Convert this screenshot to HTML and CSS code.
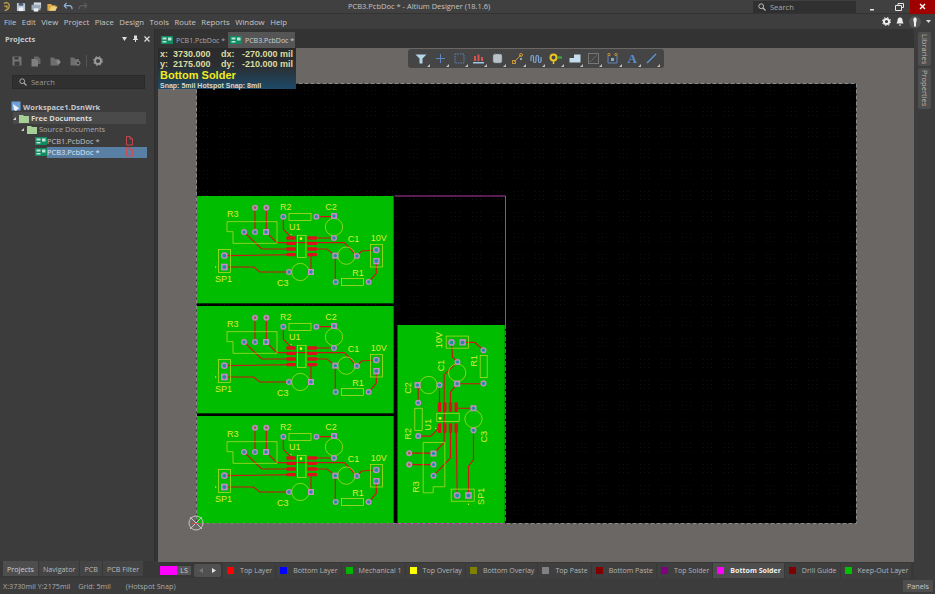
FILE: index.html
```html
<!DOCTYPE html>
<html lang="en">
<head>
    <meta charset="UTF-8">
    <title>PCB3.PcbDoc * - Altium Designer (18.1.6)</title>
    <link rel="stylesheet" href="styles.css">
</head>
<body>
    <svg class="defs" width="0" height="0">
        <defs>
            <g id="doc-icon">
                <rect x="0" y="0" width="12" height="8" fill="#0f8a63"/>
                <rect x="1.500" y="1.500" width="4" height="2" fill="#bfe6d4"/>
                <rect x="7" y="1.500" width="3.500" height="3" fill="#bfe6d4"/>
                <rect x="1.500" y="5" width="4" height="1.500" fill="#bfe6d4"/>
            </g>
            <g id="red-doc">
                <path d="M0.500 0.500h3.500l2.500 2.500v6h-6z M4 0.500v2.500h2.500" fill="none" stroke="#d2484e" stroke-width="0.900"/>
            </g>
            <g id="board">
                <rect x="20" y="18" width="590" height="322" fill="#00bd00"/>
                <g class="track">
                    <path d="M194 53V126M228 53V126M279 80V118L305 144M378 80H431M431 144H366"/>
                    <path d="M161 126L214 177H302M227 126L260 158H462L500 198"/>
                    <path d="M102 197L316 194M102 231H190L208 246H296M362 246V194"/>
                    <path d="M366 177H410L435 197V276M500 198L514 183L558 180M558 213V250L535 276"/>
                </g>
                <g class="overlay">
                    <path d="M110 95H260V160H128V125H110Z"/>
                    <rect x="296" y="70" width="66" height="22"/>
                    <rect x="453" y="266" width="66" height="21"/>
                    <rect x="541" y="164" width="36" height="67"/>
                    <rect x="85" y="179" width="36" height="69"/>
                    <rect x="322" y="136" width="25" height="67"/>
                    <circle cx="431" cy="111" r="26"/>
                    <circle cx="468" cy="197" r="26"/>
                    <circle cx="330" cy="246" r="26"/>
                </g>
                <g class="smd">
                    <rect x="288" y="139" width="29" height="10" rx="3"/>
                    <rect x="288" y="155" width="29" height="10" rx="3"/>
                    <rect x="288" y="172" width="29" height="10" rx="3"/>
                    <rect x="288" y="189" width="29" height="10" rx="3"/>
                    <rect x="351" y="139" width="29" height="10" rx="3"/>
                    <rect x="351" y="155" width="29" height="10" rx="3"/>
                    <rect x="351" y="172" width="29" height="10" rx="3"/>
                    <rect x="351" y="189" width="29" height="10" rx="3"/>
                </g>
                <circle cx="332" cy="146" r="4" fill="#f2f21e"/>
                <circle cx="302" cy="133" r="2" fill="#f2f21e"/>
                <circle cx="76" cy="231" r="2" fill="#f2f21e"/>
                <g class="pad">
                    <circle cx="279" cy="80" r="9"/>
                    <circle cx="378" cy="80" r="9"/>
                    <circle cx="431" cy="144" r="9"/>
                    <circle cx="161" cy="126" r="9"/>
                    <circle cx="194" cy="126" r="9"/>
                    <circle cx="500" cy="198" r="9"/>
                    <circle cx="558" cy="180" r="10"/>
                    <circle cx="436" cy="276" r="9"/>
                    <circle cx="535" cy="276" r="9"/>
                    <circle cx="296" cy="246" r="9"/>
                    <circle cx="102" cy="197" r="10"/>
                    <circle cx="194" cy="53" r="9"/>
                    <circle cx="228" cy="53" r="9"/>
                    <rect x="422" y="69" width="18" height="18"/>
                    <rect x="218" y="117" width="18" height="18"/>
                    <rect x="426" y="188" width="18" height="18"/>
                    <rect x="353" y="237" width="18" height="18"/>
                    <rect x="549" y="204" width="19" height="19"/>
                    <rect x="92" y="221" width="20" height="20"/>
                </g>
                <g class="hole">
                    <circle cx="279" cy="80" r="5"/>
                    <circle cx="378" cy="80" r="5"/>
                    <circle cx="431" cy="144" r="5"/>
                    <circle cx="161" cy="126" r="5"/>
                    <circle cx="194" cy="126" r="5"/>
                    <circle cx="500" cy="198" r="5"/>
                    <circle cx="558" cy="180" r="6"/>
                    <circle cx="436" cy="276" r="5"/>
                    <circle cx="535" cy="276" r="5"/>
                    <circle cx="296" cy="246" r="5"/>
                    <circle cx="102" cy="197" r="6"/>
                    <circle cx="431" cy="78" r="5"/>
                    <circle cx="227" cy="126" r="5"/>
                    <circle cx="435" cy="197" r="5"/>
                    <circle cx="362" cy="246" r="5"/>
                    <circle cx="558" cy="213" r="6"/>
                    <circle cx="102" cy="231" r="6"/>
                </g>
                <circle cx="194" cy="53" r="4" fill="#8a6a3a"/>
                <circle cx="228" cy="53" r="4" fill="#8a6a3a"/>
                <g class="silk">
                    <text x="110" y="82">R3</text>
                    <text x="269" y="60">R2</text>
                    <text x="296" y="120">U1</text>
                    <text x="405" y="60">C2</text>
                    <text x="472" y="157">C1</text>
                    <text x="541" y="153">10V</text>
                    <text x="486" y="257">R1</text>
                    <text x="74" y="277">SP1</text>
                    <text x="260" y="288">C3</text>
                </g>
            </g>
            <pattern id="grid-dots" x="197" y="84" width="21" height="21" patternUnits="userSpaceOnUse">
                <g fill="#121212">
                    <rect x="2" y="2" width="1" height="1"/>
                    <rect x="6" y="2" width="1" height="1"/>
                    <rect x="10" y="2" width="1" height="1"/>
                    <rect x="2" y="6" width="1" height="1"/>
                    <rect x="6" y="6" width="1" height="1"/>
                    <rect x="10" y="6" width="1" height="1"/>
                    <rect x="2" y="10" width="1" height="1"/>
                    <rect x="6" y="10" width="1" height="1"/>
                    <rect x="10" y="10" width="1" height="1"/>
                </g>
            </pattern>
        </defs>
    </svg>

    <header class="titlebar">
        <div class="quick-icons">
            <svg width="9" height="11" viewBox="0 0 10 12"><path d="M2 2.500C6 1 8 2 8 5C8 8 6 10 3 10.500M2.500 5.500H5.500V8" fill="none" stroke="#c8a24a" stroke-width="1.400"/></svg>
            <svg width="10" height="10" viewBox="0 0 11 11"><path d="M1 1H9L10 2V10H1Z" fill="#b9c6d6"/><rect x="3" y="1" width="5" height="3" fill="#4c5a6c"/><rect x="3" y="6" width="5" height="4" fill="#eef2f6"/></svg>
            <svg width="11" height="10" viewBox="0 0 12 11"><rect x="3" y="0.500" width="8" height="6" fill="#d4dbe3"/><rect x="0.500" y="3" width="10" height="6" fill="#9aa8b8"/><rect x="3" y="7" width="5" height="3.500" fill="#eef2f6"/></svg>
            <svg width="11" height="10" viewBox="0 0 13 11"><path d="M0.500 2H5L6 3.500H10V10H0.500Z" fill="#d7a94a"/><path d="M2.500 10L5 5H12.500L10 10Z" fill="#f0cf7a"/></svg>
            <svg width="10" height="9" viewBox="0 0 11 10"><path d="M1 4H7C9 4 10 5.500 10 8M1 4L4 1M1 4L4 7" fill="none" stroke="#8fb4d8" stroke-width="1.300"/></svg>
            <svg width="10" height="9" viewBox="0 0 11 10"><path d="M10 4H4C2 4 1 5.500 1 8M10 4L7 1M10 4L7 7" fill="none" stroke="#5e5e5e" stroke-width="1.300"/></svg>
        </div>
        <div class="app-title">PCB3.PcbDoc * - Altium Designer (18.1.6)</div>
        <div class="title-search">
            <svg width="8" height="8" viewBox="0 0 8 8"><circle cx="3.200" cy="3.200" r="2.400" fill="none" stroke="#bbb" stroke-width="1"/><path d="M5 5L7.500 7.500" stroke="#bbb" stroke-width="1.200"/></svg>
            <span>Search</span>
        </div>
        <div class="window-btns">
            <div class="win-btn"><svg width="8" height="8" viewBox="0 0 8 8"><rect x="2" y="6" width="4" height="1.500" fill="#e6e6e6"/></svg></div>
            <div class="win-btn"><svg width="9" height="8" viewBox="0 0 9 8"><path d="M3 2V0.500H8.500V4.500H6.500M0.500 2.500H6.500V7.500H0.500Z" fill="none" stroke="#e6e6e6"/></svg></div>
            <div class="win-btn close-btn"><svg width="7" height="7" viewBox="0 0 7 7"><path d="M1 1L6 6M6 1L1 6" stroke="#fff" stroke-width="1.400"/></svg></div>
        </div>
    </header>

    <nav class="menubar">
        <span>File</span><span>Edit</span><span>View</span><span>Project</span><span>Place</span><span>Design</span><span>Tools</span><span>Route</span><span>Reports</span><span>Window</span><span>Help</span>
        <div class="menu-right">
            <svg width="9" height="9" viewBox="0 0 9 9"><circle cx="4.500" cy="4.500" r="2.600" fill="none" stroke="#eee" stroke-width="2"/><circle cx="4.500" cy="4.500" r="4.200" fill="none" stroke="#eee" stroke-width="1" stroke-dasharray="1.500 1.800"/></svg>
            <svg width="8" height="9" viewBox="0 0 8 9"><path d="M4 0.500C6 0.500 6.500 2 6.500 4L7.500 6.500H0.500L1.500 4C1.500 2 2 0.500 4 0.500ZM3 7.500H5V8.500H3Z" fill="#eee"/></svg>
            <svg width="12" height="12" viewBox="0 0 12 12"><circle cx="6" cy="6" r="6" fill="#555"/><path d="M6 1.500C7.500 1.500 8 3 7.500 5L7 7V10.500H5V7L4.500 5C4 3 4.500 1.500 6 1.500Z" fill="#f2f2f2"/></svg>
            <svg width="5" height="3" viewBox="0 0 5 3"><path d="M0 0H5L2.500 3Z" fill="#ddd"/></svg>
        </div>
    </nav>

    <div class="main">
        <aside class="left-col">
            <section class="panel">
                <div class="panel-head">
                    <span class="panel-title">Projects</span>
                    <div class="panel-ctrls">
                        <svg width="5" height="4" viewBox="0 0 5 4"><path d="M0 0H5L2.500 4Z" fill="#ddd"/></svg>
                        <svg width="5" height="7" viewBox="0 0 5 7"><path d="M1 0.500H4V4H5V5H3V7H2V5H0V4H1Z" fill="#ddd"/></svg>
                        <svg width="6" height="6" viewBox="0 0 6 6"><path d="M0.500 0.500L5.500 5.500M5.500 0.500L0.500 5.500" stroke="#ddd" stroke-width="1.200"/></svg>
                    </div>
                </div>
                <div class="panel-tools">
                    <svg width="10" height="10" viewBox="0 0 10 10"><path d="M0.500 0.500H8.500L9.500 1.500V9.500H0.500Z" fill="#757575"/><rect x="2.500" y="5.500" width="5" height="4" fill="#3c3c3c"/><rect x="2.500" y="1" width="4" height="2.500" fill="#3c3c3c"/></svg>
                    <svg width="10" height="11" viewBox="0 0 10 11"><path d="M3 0.500H7L9.500 3V8H3Z" fill="#666"/><path d="M0.500 3H5L7 5V10.500H0.500Z" fill="#808080"/></svg>
                    <svg width="11" height="9" viewBox="0 0 11 9"><path d="M0.500 0.500H4L5 2H9V8.500H0.500Z" fill="#6e6e6e"/><circle cx="8.500" cy="5" r="2" fill="#8a8a8a"/></svg>
                    <svg width="11" height="9" viewBox="0 0 11 9"><path d="M0.500 0.500H4L5 2H9V8.500H0.500Z" fill="#6e6e6e"/><circle cx="8" cy="6" r="2" fill="#3c3c3c" stroke="#8a8a8a"/></svg>
                    <span class="tool-sep"></span>
                    <svg width="10" height="10" viewBox="0 0 10 10"><circle cx="5" cy="5" r="3" fill="none" stroke="#9a9a9a" stroke-width="2"/><circle cx="5" cy="5" r="4.500" fill="none" stroke="#9a9a9a" stroke-width="1" stroke-dasharray="1.600 2"/></svg>
                </div>
                <div class="panel-search">
                    <svg width="8" height="8" viewBox="0 0 8 8"><circle cx="3.200" cy="3.200" r="2.400" fill="none" stroke="#aaa" stroke-width="1"/><path d="M5 5L7.500 7.500" stroke="#aaa" stroke-width="1.200"/></svg>
                    <span>Search</span>
                </div>
                <div class="tree">
                    <div class="tree-row workspace">
                        <svg width="11" height="11" viewBox="0 0 11 11"><rect x="0.500" y="0.500" width="9" height="9" fill="#6f9fd8"/><path d="M2 3L8 7L5 10L3 9Z" fill="#e8f0fa"/></svg>
                        <span>Workspace1.DsnWrk</span>
                    </div>
                    <div class="tree-row group-row">
                        <i class="arrow"></i>
                        <svg width="10" height="9" viewBox="0 0 10 9"><path d="M0 1H4L5 2H10V9H0Z" fill="#a6cf98"/></svg>
                        <span>Free Documents</span>
                    </div>
                    <div class="tree-row source-row">
                        <i class="arrow"></i>
                        <svg width="10" height="9" viewBox="0 0 10 9"><path d="M0 1H4L5 2H10V9H0Z" fill="#a6cf98"/></svg>
                        <span>Source Documents</span>
                    </div>
                    <div class="tree-row doc-row">
                        <svg width="12" height="8" viewBox="0 0 12 8"><use href="#doc-icon"/></svg>
                        <span class="doc-name">PCB1.PcbDoc *</span>
                        <svg class="red-doc" width="7" height="10" viewBox="0 0 7 10"><use href="#red-doc"/></svg>
                    </div>
                    <div class="tree-row doc-row">
                        <svg width="12" height="8" viewBox="0 0 12 8"><use href="#doc-icon"/></svg>
                        <div class="selected">
                            <span class="doc-name">PCB3.PcbDoc *</span>
                            <svg class="red-doc" width="7" height="10" viewBox="0 0 7 10"><use href="#red-doc"/></svg>
                        </div>
                    </div>
                </div>
            </section>
            <div class="panel-tabs">
                <span class="ptab active">Projects</span><span class="ptab">Navigator</span><span class="ptab">PCB</span><span class="ptab">PCB Filter</span>
            </div>
        </aside>

        <section class="work">
            <div class="doc-tabs">
                <div class="doc-tab">
                    <svg width="12" height="8" viewBox="0 0 12 8"><use href="#doc-icon"/></svg>
                    <span>PCB1.PcbDoc *</span>
                </div>
                <div class="doc-tab current">
                    <svg width="12" height="8" viewBox="0 0 12 8"><use href="#doc-icon"/></svg>
                    <span>PCB3.PcbDoc *</span>
                </div>
            </div>

            <div class="canvas">
                <svg class="pcb" width="756" height="514" viewBox="158 48 756 514">
                    <rect x="196.500" y="83.500" width="660" height="440" fill="#000" stroke="#8a8a8a" stroke-dasharray="4 2"/>
                    <rect x="197" y="84" width="659" height="439" fill="url(#grid-dots)"/>
                    <path d="M394.500 196H505.500V325" fill="none" stroke="#b03aa0"/>
                    <path d="M505.500 325V523M197 523.500H505" fill="none" stroke="#b03aa0" stroke-dasharray="4 2"/>
                    <use href="#board" transform="translate(197 196) scale(0.3333) translate(-20 -18)"/>
                    <use href="#board" transform="translate(197 306) scale(0.3333) translate(-20 -18)"/>
                    <use href="#board" transform="translate(197 416) scale(0.3333) translate(-20 -18)"/>
                    <use href="#board" transform="translate(397.500 523) rotate(-90) scale(0.3356 0.3333) translate(-20 -18)"/>
                    <g class="origin">
                        <circle cx="196" cy="523" r="7"/>
                        <path d="M190 517L202 529M202 517L190 529"/>
                    </g>
                    <path d="M192 523.500H200" stroke="#c9505a"/>
                </svg>

                <div class="hud">
                    <div class="hud-line"><span class="hud-val">x:&nbsp; 3730.000</span><span>dx:&nbsp;&nbsp; -270.000 mil</span></div>
                    <div class="hud-line"><span class="hud-val">y:&nbsp; 2175.000</span><span>dy:&nbsp;&nbsp; -210.000 mil</span></div>
                    <div class="hud-layer">Bottom Solder</div>
                    <div class="hud-snap">Snap: 5mil Hotspot Snap: 8mil</div>
                </div>

                <div class="toolbar">
                    <div class="tool"><svg width="12" height="10" viewBox="0 0 12 10"><path d="M0.500 0.500H11.500L7.500 4.500V9.500H4.500V4.500Z" fill="#b4d6ea"/></svg></div>
                    <div class="tool"><svg width="11" height="11" viewBox="0 0 11 11"><path d="M5.500 1V10M1 5.500H10" stroke="#5f86bd"/></svg></div>
                    <div class="tool"><svg width="11" height="11" viewBox="0 0 11 11"><rect x="1" y="1" width="9" height="9" fill="none" stroke="#5f86bd" stroke-dasharray="1.500 1"/></svg></div>
                    <div class="tool"><svg width="11" height="10" viewBox="0 0 11 10"><rect x="1" y="2" width="2" height="5" fill="#d9534f"/><rect x="4.500" y="0.500" width="2" height="6.500" fill="#d9534f"/><rect x="8" y="3" width="2" height="4" fill="#d9534f"/><rect x="0" y="8" width="11" height="1.500" fill="#9cc7e6"/></svg></div>
                    <div class="tool"><svg width="11" height="11" viewBox="0 0 11 11"><rect x="1" y="1" width="9" height="9" rx="2" fill="#b9c2c9" stroke="#6d7880" stroke-dasharray="1 1"/></svg></div>
                    <div class="tool"><svg width="11" height="11" viewBox="0 0 11 11"><path d="M2 9L9 2" stroke="#c7963a"/><rect x="0.500" y="7.500" width="3" height="3" fill="none" stroke="#c7963a"/><circle cx="9" cy="2" r="1.500" fill="none" stroke="#c7963a"/><circle cx="9" cy="6" r="1" fill="#b0c4d8"/></svg></div>
                    <div class="tool"><svg width="12" height="10" viewBox="0 0 12 10"><path d="M1 7V3C1 1 3.500 1 3.500 3V7C3.500 9 6 9 6 7V3C6 1 8.500 1 8.500 3V7C8.500 9 11 9 11 7V3" fill="none" stroke="#7fa8d6" stroke-width="1.200"/></svg></div>
                    <div class="tool"><svg width="13" height="11" viewBox="0 0 13 11"><circle cx="4.500" cy="4.500" r="3" fill="none" stroke="#eec41f" stroke-width="2"/><path d="M4.500 8V11" stroke="#eec41f" stroke-width="1.500"/><path d="M8 4.500H13" stroke="#35b535" stroke-width="2"/></svg></div>
                    <div class="tool"><svg width="12" height="9" viewBox="0 0 12 9"><path d="M0.500 8.500V4H5V0.500H11.500V8.500Z" fill="#c4dcec"/></svg></div>
                    <div class="tool"><svg width="11" height="11" viewBox="0 0 11 11"><rect x="0.500" y="0.500" width="10" height="10" fill="none" stroke="#777"/><path d="M2 9L9 2" stroke="#777" stroke-dasharray="2 1"/></svg></div>
                    <div class="tool"><svg width="11" height="11" viewBox="0 0 11 11"><path d="M1 3V10H10V3" fill="none" stroke="#5f86bd"/><circle cx="2" cy="1.500" r="1.200" fill="none" stroke="#c7963a"/><circle cx="9" cy="1.500" r="1.200" fill="none" stroke="#c7963a"/><rect x="4" y="5" width="3" height="3" fill="#8aa8c8"/></svg></div>
                    <div class="tool tool-a">A</div>
                    <div class="tool"><svg width="11" height="11" viewBox="0 0 11 11"><path d="M1 10L10 1" stroke="#5b9bdc" stroke-width="1.200"/></svg></div>
                </div>
            </div>

            <div class="layer-bar">
                <span class="ls-swatch"></span>
                <span class="ls-btn">LS</span>
                <div class="layer-nav">
                    <svg width="4" height="5" viewBox="0 0 4 5"><path d="M4 0V5L0 2.500Z" fill="#777"/></svg>
                    <svg width="4" height="5" viewBox="0 0 4 5"><path d="M0 0V5L4 2.500Z" fill="#e4e4e4"/></svg>
                </div>
                <div class="layer"><i class="sw-top"></i>Top Layer</div>
                <div class="layer"><i class="sw-bottom"></i>Bottom Layer</div>
                <div class="layer"><i class="sw-mech"></i>Mechanical 1</div>
                <div class="layer"><i class="sw-overlay"></i>Top Overlay</div>
                <div class="layer"><i class="sw-boverlay"></i>Bottom Overlay</div>
                <div class="layer"><i class="sw-paste"></i>Top Paste</div>
                <div class="layer"><i class="sw-bpaste"></i>Bottom Paste</div>
                <div class="layer"><i class="sw-solder"></i>Top Solder</div>
                <div class="layer active"><i class="sw-bsolder"></i>Bottom Solder</div>
                <div class="layer"><i class="sw-drill"></i>Drill Guide</div>
                <div class="layer"><i class="sw-keepout"></i>Keep-Out Layer</div>
            </div>
        </section>

        <aside class="side-strip">
            <span class="side-tab">Libraries</span>
            <span class="side-tab">Properties</span>
        </aside>
    </div>

    <footer class="statusbar">
        <span>X:3730mil Y:2175mil</span>
        <span class="grid-info">Grid: 5mil</span>
        <span class="snap-info">(Hotspot Snap)</span>
        <span class="panels-btn">Panels</span>
    </footer>
</body>
</html>
```

FILE: styles.css
```css
* {
    box-sizing: border-box;
}
html, body {
    margin: 0;
    padding: 0;
}
body {
    width: 935px;
    height: 594px;
    overflow: hidden;
    display: flex;
    flex-direction: column;
    background-color: #3c3c3c;
    color: #c8c8c8;
    font-family: "Open Sans", "Noto Sans", sans-serif;
    font-size: 7.5px;
}
.defs {
    position: absolute;
}

/* title bar */
.titlebar {
    height: 14px;
    flex: none;
    display: flex;
    align-items: center;
    position: relative;
    background-color: #404040;
    border-bottom: 1px solid #333;
}
.quick-icons {
    display: flex;
    align-items: center;
    gap: 5px;
    padding-left: 2px;
}
.app-title {
    position: absolute;
    left: 348px;
    top: 1px;
    color: #c4c4c4;
    font-size: 7.5px;
    line-height: 11px;
}
.title-search {
    margin-left: auto;
    width: 103px;
    height: 12px;
    display: flex;
    align-items: center;
    gap: 4px;
    padding-left: 5px;
    background-color: #303030;
    color: #a8a8a8;
}
.window-btns {
    display: flex;
    width: 79px;
    height: 14px;
}
.win-btn {
    width: 32px;
    display: flex;
    align-items: center;
    justify-content: center;
}
.win-btn + .win-btn {
    width: 22px;
}
.win-btn.close-btn {
    width: 25px;
    background-color: #a00000;
}

/* menu */
.menubar {
    height: 15px;
    flex: none;
    display: flex;
    align-items: center;
    gap: 5.500px;
    padding-left: 4px;
    background-color: #3e3e3e;
    color: #c6c6c6;
    font-size: 7.8px;
}
.menu-right {
    margin-left: auto;
    display: flex;
    align-items: center;
    gap: 5px;
    padding-right: 4px;
}

/* main area */
.main {
    flex: 1;
    display: flex;
    min-height: 0;
}
.left-col {
    width: 158px;
    flex: none;
    display: flex;
    flex-direction: column;
    background-color: #333;
}
.panel {
    flex: 1;
    width: 155px;
    background-color: #3c3c3c;
    border-right: 1px solid #2e2e2e;
}
.panel-head {
    height: 19px;
    display: flex;
    align-items: center;
    padding: 0 4px 0 5px;
}
.panel-title {
    font-weight: 700;
    color: #c8c8c8;
}
.panel-ctrls {
    margin-left: auto;
    display: flex;
    align-items: center;
    gap: 6px;
}
.panel-tools {
    height: 24px;
    display: flex;
    align-items: center;
    gap: 9px;
    padding: 2px 0 0 12px;
}
.tool-sep {
    width: 1px;
    height: 12px;
    margin: 0 -3px 0 -4px;
    background-color: #555;
}
.panel-search {
    height: 14px;
    margin: 3px 9px 0 12px;
    display: flex;
    align-items: center;
    gap: 4px;
    padding-left: 6px;
    background-color: #303030;
    border: 1px solid #2a2a2a;
    color: #9a9a9a;
}
.tree {
    margin-top: 12px;
}
.tree-row {
    height: 11.400px;
    display: flex;
    align-items: center;
    white-space: nowrap;
}
.workspace {
    padding-left: 11px;
    gap: 1px;
    font-weight: 700;
    color: #c8c8c8;
}
.group-row {
    margin-left: 13px;
    margin-right: 8px;
    gap: 2px;
    font-weight: 700;
    color: #d8d8d8;
    background-color: #4a4a4a;
}
.source-row {
    padding-left: 21px;
    gap: 2px;
    color: #aaa;
}
.arrow {
    width: 0;
    height: 0;
    border-left: 3px solid transparent;
    border-bottom: 3px solid #ccc;
    margin-right: 1px;
}
.doc-row {
    padding-left: 35px;
    color: #c0c0c0;
}
.doc-name {
    width: 79px;
}
.red-doc {
    flex: none;
}
.selected {
    display: flex;
    align-items: center;
    width: 100px;
    height: 100%;
    background-color: #5a7fa5;
    color: #dce6ef;
}
.panel-tabs {
    height: 17px;
    flex: none;
    display: flex;
    padding: 0 0 2px 3px;
    gap: 1px;
    background-color: #383838;
    font-size: 7.200px;
}
.ptab {
    height: 15px;
    display: flex;
    align-items: center;
    padding: 0 4px;
    background-color: #444;
    color: #b8b8b8;
}
.ptab.active {
    background-color: #4e4e4e;
    color: #d0d0d0;
}

/* document area */
.work {
    flex: 1;
    min-width: 0;
    display: flex;
    flex-direction: column;
    background-color: #333;
}
.doc-tabs {
    height: 19px;
    flex: none;
    display: flex;
    align-items: flex-end;
    padding-left: 2px;
    background-color: #333;
    font-size: 7px;
}
.doc-tab {
    width: 68px;
    height: 16px;
    display: flex;
    align-items: center;
    gap: 3px;
    padding-left: 1px;
    color: #a8a8a8;
    white-space: nowrap;
}
.doc-tab.current {
    width: 67px;
    padding-left: 2px;
    background-color: #555;
    color: #d0d0d0;
}
.canvas {
    width: 756px;
    height: 514px;
    flex: none;
    position: relative;
    background-color: #6b6765;
}
.pcb {
    display: block;
}
.track path {
    fill: none;
    stroke: #d01515;
    stroke-width: 3.500;
}
.overlay * {
    fill: none;
    stroke: #cfe02a;
    stroke-width: 2;
}
.smd rect {
    fill: #d8141a;
}
.pad {
    fill: #c78ac8;
}
.hole {
    fill: #1f8f9f;
}
.silk text {
    fill: #dcec34;
    font-family: "Liberation Sans", sans-serif;
    font-size: 27px;
}
.origin circle, .origin path {
    fill: none;
    stroke: #c8c8c8;
    stroke-width: 1;
}
.hud {
    position: absolute;
    left: 0;
    top: 0;
    width: 138px;
    height: 41px;
    padding: 1px 3px 1px 2px;
    background: linear-gradient(#2a2a2a, #2b2f33 45%, #1d4a68);
    font-family: "Liberation Sans", sans-serif;
    font-weight: 700;
    color: #dcdca0;
    font-size: 9px;
    line-height: 10px;
    white-space: nowrap;
}
.hud-line {
    display: flex;
    justify-content: space-between;
}
.hud-layer {
    color: #f2ea1a;
    font-size: 11px;
    line-height: 12px;
}
.hud-snap {
    color: #d8d8c0;
    font-size: 7px;
    line-height: 9px;
}
.toolbar {
    position: absolute;
    left: 250px;
    top: 1px;
    width: 256px;
    height: 19px;
    display: flex;
    align-items: center;
    padding-left: 3.500px;
    background-color: #454545;
    border-radius: 3px;
}
.tool {
    width: 19.200px;
    height: 19px;
    flex: none;
    position: relative;
    display: flex;
    align-items: center;
    justify-content: center;
}
.tool::after {
    content: "";
    position: absolute;
    right: 1px;
    bottom: 1px;
    width: 0;
    height: 0;
    border-left: 3px solid transparent;
    border-bottom: 3px solid #c0c0c0;
}
.tool-a {
    font-family: "Liberation Serif", serif;
    font-weight: 700;
    font-size: 13px;
    line-height: 13px;
    color: #5b8fcf;
}

/* layer tabs */
.layer-bar {
    height: 16px;
    flex: none;
    display: flex;
    align-items: center;
    padding-left: 2px;
    background-color: #383838;
    white-space: nowrap;
    font-size: 7.050px;
}
.ls-swatch {
    width: 17px;
    height: 9px;
    flex: none;
    background-color: #ff00ff;
}
.ls-btn {
    width: 14px;
    height: 9px;
    flex: none;
    display: flex;
    align-items: center;
    justify-content: center;
    background-color: #555;
    color: #d0d0d0;
}
.layer-nav {
    width: 27px;
    height: 13px;
    flex: none;
    margin: 0 2px 0 3px;
    display: flex;
    align-items: center;
    justify-content: space-around;
    background-color: #505050;
    border-radius: 2px;
}
.layer {
    height: 15px;
    flex: none;
    display: flex;
    align-items: center;
    gap: 6px;
    padding: 0 3px 0 4px;
    color: #b4b4b4;
    background-color: #3f3f3f;
    margin-right: 1px;
}
.layer.active {
    background-color: #4e4e4e;
    color: #eee;
    font-weight: 700;
}
.layer i {
    width: 7px;
    height: 7px;
    flex: none;
}
.sw-top { background-color: #ff0000; }
.sw-bottom { background-color: #0000ff; }
.sw-mech { background-color: #00b400; }
.sw-overlay { background-color: #ffff00; }
.sw-boverlay { background-color: #808000; }
.sw-paste { background-color: #808080; }
.sw-bpaste { background-color: #800000; }
.sw-solder { background-color: #800080; }
.sw-bsolder { background-color: #ff00ff; }
.sw-drill { background-color: #800000; }
.sw-keepout { background-color: #00c000; }

/* right strip */
.side-strip {
    width: 21px;
    flex: none;
    display: flex;
    flex-direction: column;
    align-items: center;
    gap: 2px;
    padding-top: 3px;
    background-color: #3c3c3c;
}
.side-tab {
    writing-mode: vertical-rl;
    width: 13px;
    padding: 2px 0;
    display: flex;
    align-items: center;
    background-color: #4e4e4e;
    border-radius: 2px;
    color: #bdbdbd;
}
.side-tab:first-child {
    height: 34px;
}
.side-tab:last-child {
    height: 41px;
}

/* status */
.statusbar {
    height: 16px;
    flex: none;
    display: flex;
    align-items: center;
    padding-left: 3px;
    background-color: #3c3c3c;
    color: #aaa;
    white-space: nowrap;
    font-size: 7.200px;
}
.grid-info {
    margin-left: 8px;
}
.snap-info {
    margin-left: 15px;
}
.panels-btn {
    margin-left: auto;
    margin-right: 2px;
    width: 30px;
    height: 12px;
    display: flex;
    align-items: center;
    justify-content: center;
    background-color: #4e4e4e;
    color: #c8c8c8;
}
```
